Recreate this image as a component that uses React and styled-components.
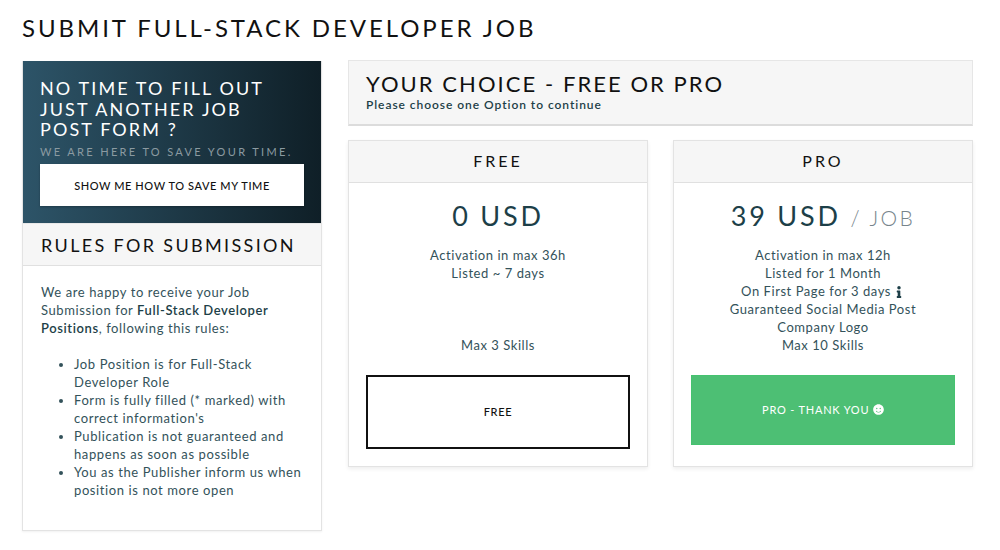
import React from 'react'
import styled, { createGlobalStyle } from 'styled-components'
import { FaInfo, FaSmile } from 'react-icons/fa'

const GlobalStyle = createGlobalStyle`
  * { box-sizing: border-box; }
  html, body { margin: 0; background: #fff; }
  body {
    font-family: Lato, "Open Sans", sans-serif;
    color: #1d3f48;
    overflow: hidden;
  }
`

const freeList = ['Activation in max 36h', 'Listed ~ 7 days', '', '', '', 'Max 3 Skills']

const rules = [
  <>Job Position is for Full-Stack Developer Role</>,
  <>Form is fully filled (* marked) with correct information's</>,
  <>Publication is not guaranteed and happens as soon as possible</>,
  <>You as the Publisher inform us when position is not more open</>,
]

export default function App() {
  return (
    <Page>
      <GlobalStyle />
      <PageTitle>SUBMIT FULL-STACK DEVELOPER JOB</PageTitle>
      <Columns>
        <RulesCard>
          <Hero>
            <HeroTitle>NO TIME TO FILL OUT<br />JUST ANOTHER JOB<br />POST FORM ?</HeroTitle>
            <HeroSub>WE ARE HERE TO SAVE YOUR TIME.</HeroSub>
            <HeroButton>SHOW ME HOW TO SAVE MY TIME</HeroButton>
          </Hero>
          <RulesHeader>RULES FOR SUBMISSION</RulesHeader>
          <RulesBody>
            <Intro>
              We are happy to receive your Job Submission for <b>Full-Stack Developer Positions</b>, following this rules:
            </Intro>
            <RuleList>
              {rules.map((r, i) => <li key={i}>{r}</li>)}
            </RuleList>
          </RulesBody>
        </RulesCard>

        <Choice>
          <ChoiceHeader>
            <ChoiceTitle>YOUR CHOICE - FREE OR PRO</ChoiceTitle>
            <ChoiceSub>Please choose one Option to continue</ChoiceSub>
          </ChoiceHeader>
          <Plans>
            <Plan>
              <PlanHeader>FREE</PlanHeader>
              <PlanBody>
                <Price>0 USD</Price>
                <Features>
                  {freeList.map((f, i) => <li key={i}>{f || '\u00a0'}</li>)}
                </Features>
                <OutlineButton>FREE</OutlineButton>
              </PlanBody>
            </Plan>
            <Plan>
              <PlanHeader>PRO</PlanHeader>
              <PlanBody>
                <Price>39 USD <small>/ JOB</small></Price>
                <Features>
                  <li>Activation in max 12h</li>
                  <li>Listed for 1 Month</li>
                  <li>On First Page for 3 days <FaInfo size={12} /></li>
                  <li>Guaranteed Social Media Post</li>
                  <li>Company Logo</li>
                  <li>Max 10 Skills</li>
                </Features>
                <GreenButton>PRO - THANK YOU <FaSmile size={11} /></GreenButton>
              </PlanBody>
            </Plan>
          </Plans>
        </Choice>
      </Columns>
    </Page>
  )
}

const Page = styled.div`
  width: 1000px;
  height: 550px;
  padding: 13px 27px 0 22px;
`

const PageTitle = styled.h1`
  margin: 0 0 18px;
  font-size: 24px;
  line-height: 30px;
  font-weight: 400;
  letter-spacing: 2.92px;
  color: #111;
`

const Columns = styled.div`
  display: grid;
  grid-template-columns: 300px 625px;
  gap: 26px;
  align-items: start;
`

const RulesCard = styled.div`
  height: 470px;
  border: 1px solid #e3e3e3;
  border-top: 0;
  box-shadow: 0 1px 2px rgba(0, 0, 0, 0.06);
`

const Hero = styled.div`
  height: 162px;
  padding: 17px 17px 0;
  background: linear-gradient(to right, #2d5468, #0f1f27);
`

const HeroTitle = styled.div`
  font-size: 18px;
  line-height: 20.5px;
  letter-spacing: 2.1px;
  color: #fff;
`

const HeroSub = styled.div`
  margin-top: 5px;
  font-size: 11px;
  line-height: 14px;
  letter-spacing: 2.35px;
  white-space: nowrap;
  color: #8b9aa1;
`

const HeroButton = styled.div`
  height: 42px;
  margin-top: 5.5px;
  background: #fff;
  display: flex;
  align-items: center;
  justify-content: center;
  font-size: 11px;
  font-weight: 500;
  letter-spacing: 0.58px;
  color: #111;
  box-shadow: 0 1px 2px rgba(0, 0, 0, 0.25);
`

const RulesHeader = styled.div`
  height: 43px;
  padding: 0 18px;
  display: flex;
  align-items: center;
  background: #f6f6f6;
  border-bottom: 1px solid #e0e0e0;
  border-top: 1px solid #e8e8e8;
  font-size: 18px;
  letter-spacing: 2.35px;
  color: #111;
`

const RulesBody = styled.div`
  padding: 17px 17px 0 18px;
  font-size: 13px;
  line-height: 18px;
  letter-spacing: 0.6px;
  color: #33525a;
  b { font-weight: 600; color: #1d3f48; }
`

const Intro = styled.p`
  margin: 0 0 18px;
`

const RuleList = styled.ul`
  margin: 0;
  padding-left: 33px;
`

const Choice = styled.div`
  display: flex;
  flex-direction: column;
  gap: 14px;
  margin-top: -1px;
`

const ChoiceHeader = styled.div`
  height: 66px;
  padding: 10px 17px 0;
  background: #f6f6f6;
  border: 1px solid #e6e6e6;
  border-bottom: 2px solid #dcdcdc;
`

const ChoiceTitle = styled.div`
  font-size: 22px;
  line-height: 26px;
  letter-spacing: 2.05px;
  color: #111;
`

const ChoiceSub = styled.div`
  font-size: 12px;
  line-height: 15px;
  font-weight: 600;
  letter-spacing: 0.95px;
  color: #1d3f48;
`

const Plans = styled.div`
  display: grid;
  grid-template-columns: 300px 300px;
  gap: 25px;
`

const Plan = styled.div`
  height: 327px;
  border: 1px solid #e3e3e3;
  box-shadow: 0 2px 4px rgba(0, 0, 0, 0.07);
`

const PlanHeader = styled.div`
  height: 42px;
  padding-bottom: 2px;
  display: flex;
  align-items: center;
  justify-content: center;
  background: #f6f6f6;
  border-bottom: 1px solid #e0e0e0;
  font-size: 16px;
  letter-spacing: 3px;
  color: #111;
`

const PlanBody = styled.div`
  padding: 16px 17px 0;
  text-align: center;
`

const Price = styled.div`
  height: 34px;
  font-size: 27px;
  line-height: 34px;
  letter-spacing: 2.8px;
  color: #1d3f48;
  small {
    font-size: 21px;
    font-weight: 300;
    letter-spacing: 2.4px;
    color: #77858c;
  }
`

const Features = styled.ul`
  list-style: none;
  margin: 13px 0 21px;
  padding: 0;
  font-size: 13px;
  line-height: 18px;
  letter-spacing: 0.55px;
  color: #33525a;
  svg { vertical-align: -2px; margin-left: -2px; color: #1d3f48; }
`

const OutlineButton = styled.div`
  height: 74px;
  padding-bottom: 2px;
  border: 2px solid #111;
  display: flex;
  align-items: center;
  justify-content: center;
  font-size: 11px;
  font-weight: 500;
  letter-spacing: 0.7px;
  color: #111;
`

const GreenButton = styled.div`
  height: 70px;
  padding-bottom: 2px;
  background: #4dbf74;
  border: 1px solid #45c26f;
  display: flex;
  align-items: center;
  justify-content: center;
  font-size: 11px;
  letter-spacing: 0.8px;
  white-space: pre;
  color: #fff;
`
